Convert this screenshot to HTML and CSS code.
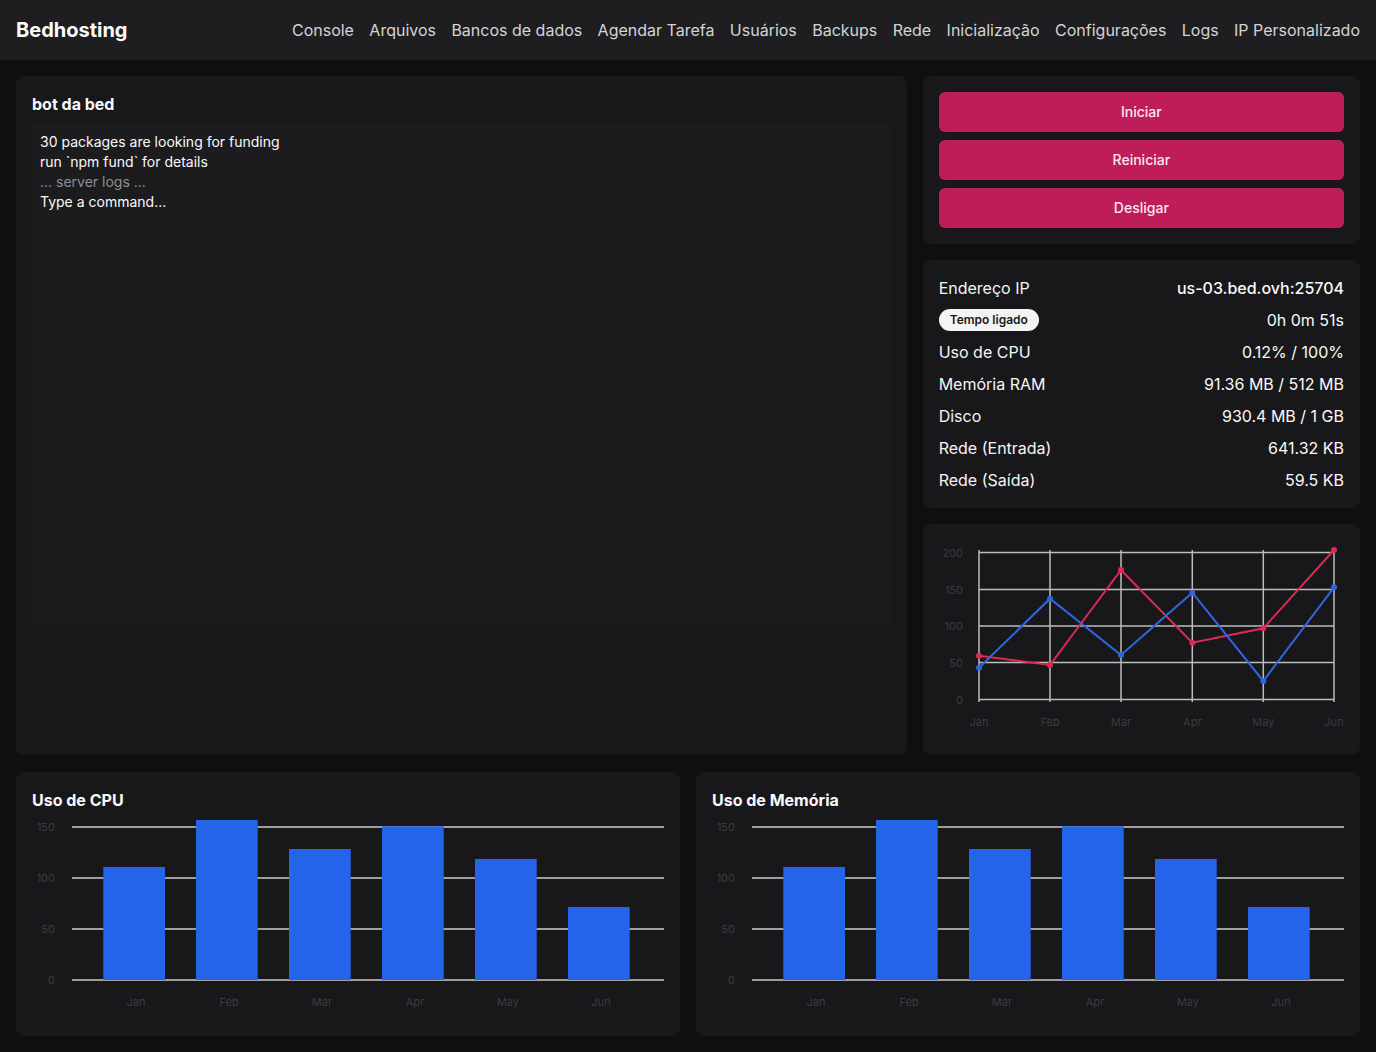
FILE: index.html
```html
<!DOCTYPE html>
<html lang="pt">
<head>
<meta charset="utf-8">
<title>Bedhosting</title>
<link rel="stylesheet" href="styles.css">
</head>
<body>
<header class="topbar">
  <div class="logo">Bedhosting</div>
  <nav class="nav">
    <a>Console</a><a>Arquivos</a><a>Bancos de dados</a><a>Agendar Tarefa</a><a>Usuários</a><a>Backups</a><a>Rede</a><a>Inicialização</a><a>Configurações</a><a>Logs</a><a>IP Personalizado</a>
  </nav>
</header>
<main class="main">
  <section class="top-grid">
    <div class="card console-card">
      <h2 class="card-title">bot da bed</h2>
      <div class="console">
        <div>30 packages are looking for funding</div>
        <div>run `npm fund` for details</div>
        <div class="muted">... server logs ...</div>
        <div>Type a command...</div>
      </div>
    </div>
    <div class="side">
      <div class="card buttons">
        <button class="btn">Iniciar</button>
        <button class="btn">Reiniciar</button>
        <button class="btn">Desligar</button>
      </div>
      <div class="card stats">
        <div class="row"><span>Endereço IP</span><span class="val strong">us-03.bed.ovh:25704</span></div>
        <div class="row"><span class="badge">Tempo ligado</span><span class="val">0h 0m 51s</span></div>
        <div class="row"><span>Uso de CPU</span><span class="val">0.12% / 100%</span></div>
        <div class="row"><span>Memória RAM</span><span class="val">91.36 MB / 512 MB</span></div>
        <div class="row"><span>Disco</span><span class="val">930.4 MB / 1 GB</span></div>
        <div class="row"><span>Rede (Entrada)</span><span class="val">641.32 KB</span></div>
        <div class="row"><span>Rede (Saída)</span><span class="val">59.5 KB</span></div>
      </div>
      <div class="card linecard">
        <svg class="linechart" viewBox="0 0 405 199" width="405" height="199">
          <g class="grid-light">
            <line x1="40" y1="12.5" x2="395" y2="12.5"/>
            <line x1="40" y1="49.5" x2="395" y2="49.5"/>
            <line x1="40" y1="86" x2="395" y2="86"/>
            <line x1="40" y1="122.5" x2="395" y2="122.5"/>
            <line x1="40" y1="159.5" x2="395" y2="159.5"/>
            <line x1="40" y1="10" x2="40" y2="162"/>
            <line x1="111" y1="10" x2="111" y2="162"/>
            <line x1="182" y1="10" x2="182" y2="162"/>
            <line x1="253.3" y1="10" x2="253.3" y2="162"/>
            <line x1="324.3" y1="10" x2="324.3" y2="162"/>
            <line x1="395" y1="10" x2="395" y2="162"/>
          </g>
          <g class="axis-text" text-anchor="end">
            <text x="24" y="17">200</text>
            <text x="24" y="54">150</text>
            <text x="24" y="90">100</text>
            <text x="24" y="127">50</text>
            <text x="24" y="164">0</text>
          </g>
          <g class="axis-text" text-anchor="middle">
            <text x="40" y="186">Jan</text>
            <text x="111" y="186">Feb</text>
            <text x="182" y="186">Mar</text>
            <text x="253.3" y="186">Apr</text>
            <text x="324.3" y="186">May</text>
            <text x="395" y="186">Jun</text>
          </g>
          <polyline class="l-red" points="40,115.7 111,125 182,30 253.3,102.7 324.3,88.3 395,10"/>
          <polyline class="l-blue" points="40,127.7 111,58.7 182,115 253.3,52.7 324.3,141 395,47.3"/>
          <g class="p-red">
            <circle cx="40" cy="115.7" r="3"/><circle cx="111" cy="125" r="3"/><circle cx="182" cy="30" r="3"/><circle cx="253.3" cy="102.7" r="3"/><circle cx="324.3" cy="88.3" r="3"/><circle cx="395" cy="10" r="3"/>
          </g>
          <g class="p-blue">
            <circle cx="40" cy="127.7" r="3"/><circle cx="111" cy="58.7" r="3"/><circle cx="182" cy="115" r="3"/><circle cx="253.3" cy="52.7" r="3"/><circle cx="324.3" cy="141" r="3"/><circle cx="395" cy="47.3" r="3"/>
          </g>
        </svg>
      </div>
    </div>
  </section>
  <section class="bottom-grid">
    <div class="card chartcard">
      <h2 class="card-title">Uso de CPU</h2>
      <svg class="barchart" viewBox="0 0 632 208" width="632" height="208">
        <g class="grid-mid">
          <line x1="40" y1="15" x2="632" y2="15"/>
          <line x1="40" y1="66" x2="632" y2="66"/>
          <line x1="40" y1="117" x2="632" y2="117"/>
          <line x1="40" y1="168" x2="632" y2="168"/>
        </g>
        <g class="axis-text" text-anchor="end">
          <text x="23" y="19">150</text>
          <text x="23" y="70">100</text>
          <text x="23" y="121">50</text>
          <text x="23" y="172">0</text>
        </g>
        <g class="bars">
          <rect x="71.3" y="55" width="61.7" height="113"/>
          <rect x="164" y="8" width="61.7" height="160"/>
          <rect x="257" y="37" width="61.7" height="131"/>
          <rect x="350" y="14.3" width="61.7" height="153.7"/>
          <rect x="443" y="47" width="61.7" height="121"/>
          <rect x="536" y="95" width="61.7" height="73"/>
        </g>
        <g class="axis-text" text-anchor="middle">
          <text x="104" y="194">Jan</text>
          <text x="197" y="194">Feb</text>
          <text x="290" y="194">Mar</text>
          <text x="383" y="194">Apr</text>
          <text x="476" y="194">May</text>
          <text x="569" y="194">Jun</text>
        </g>
      </svg>
    </div>
    <div class="card chartcard">
      <h2 class="card-title">Uso de Memória</h2>
      <svg class="barchart" viewBox="0 0 632 208" width="632" height="208">
        <g class="grid-mid">
          <line x1="40" y1="15" x2="632" y2="15"/>
          <line x1="40" y1="66" x2="632" y2="66"/>
          <line x1="40" y1="117" x2="632" y2="117"/>
          <line x1="40" y1="168" x2="632" y2="168"/>
        </g>
        <g class="axis-text" text-anchor="end">
          <text x="23" y="19">150</text>
          <text x="23" y="70">100</text>
          <text x="23" y="121">50</text>
          <text x="23" y="172">0</text>
        </g>
        <g class="bars">
          <rect x="71.3" y="55" width="61.7" height="113"/>
          <rect x="164" y="8" width="61.7" height="160"/>
          <rect x="257" y="37" width="61.7" height="131"/>
          <rect x="350" y="14.3" width="61.7" height="153.7"/>
          <rect x="443" y="47" width="61.7" height="121"/>
          <rect x="536" y="95" width="61.7" height="73"/>
        </g>
        <g class="axis-text" text-anchor="middle">
          <text x="104" y="194">Jan</text>
          <text x="197" y="194">Feb</text>
          <text x="290" y="194">Mar</text>
          <text x="383" y="194">Apr</text>
          <text x="476" y="194">May</text>
          <text x="569" y="194">Jun</text>
        </g>
      </svg>
    </div>
  </section>
</main>
</body>
</html>
```

FILE: styles.css
```css
* { box-sizing: border-box; }
html, body { margin: 0; padding: 0; }
body {
  background: #0f0f11;
  color: #fafafa;
  font-family: Inter, "Noto Sans", "Liberation Sans", sans-serif;
  font-size: 16px;
  line-height: 24px;
}
.topbar {
  height: 60px;
  background: #1e1e20;
  display: flex;
  align-items: center;
  justify-content: space-between;
  padding: 0 16px;
}
.logo {
  font-size: 20px;
  font-weight: 700;
  color: #fff;
}
.nav {
  display: flex;
  gap: 15.4px;
}
.nav a {
  color: #d4d4d8;
  font-size: 16px;
  text-decoration: none;
}
.main {
  padding: 16px;
  display: flex;
  flex-direction: column;
  gap: 17px;
}
.top-grid {
  display: grid;
  grid-template-columns: repeat(3, 1fr);
  gap: 16px;
}
.console-card { grid-column: span 2; }
.side {
  display: flex;
  flex-direction: column;
  gap: 16px;
}
.card {
  background: #18181b;
  border-radius: 8px;
  padding: 16px;
}
.card-title {
  margin: 0;
  font-size: 16px;
  line-height: 24px;
  font-weight: 700;
  color: #fafafa;
}
.console-card .card-title { margin-bottom: 8px; }
.console {
  height: 500px;
  background: #1c1c1f;
  border-radius: 4px;
  padding: 8px;
  font-size: 14px;
  line-height: 20px;
  color: #fafafa;
}
.console .muted { color: #8e8e94; }
.buttons {
  display: flex;
  flex-direction: column;
  gap: 8px;
}
.btn {
  height: 40px;
  border: 0;
  border-radius: 6px;
  background: #be1d5a;
  color: #fce7f3;
  font-family: inherit;
  font-size: 14px;
  line-height: 20px;
  font-weight: 500;
  padding: 0 0 1px;
  cursor: pointer;
}
.stats {
  display: flex;
  flex-direction: column;
  gap: 8px;
}
.row {
  display: flex;
  justify-content: space-between;
  align-items: center;
  height: 24px;
  color: #f4f4f5;
}
.val { color: #fafafa; }
.val.strong { font-weight: 500; }
.badge {
  background: #f4f4f5;
  color: #18181b;
  font-size: 12px;
  font-weight: 600;
  line-height: 16px;
  padding: 3px 11px;
  border-radius: 999px;
}
.linecard { padding: 16px; }
.linechart, .barchart { display: block; }
.grid-light line { stroke: #bdbdbd; stroke-width: 1.5; }
.grid-mid line { stroke: #9e9e9e; stroke-width: 2; }
.axis-text text {
  fill: #3b3b3f;
  font-family: Inter, "Noto Sans", sans-serif;
  font-size: 11px;
}
.l-red { fill: none; stroke: #dc2a50; stroke-width: 2; }
.l-blue { fill: none; stroke: #2f66de; stroke-width: 2; }
.p-red circle { fill: #dc2a50; }
.p-blue circle { fill: #2f66de; }
.bars rect { fill: #2563eb; }
.bottom-grid {
  display: grid;
  grid-template-columns: 1fr 1fr;
  gap: 16px;
}
```
